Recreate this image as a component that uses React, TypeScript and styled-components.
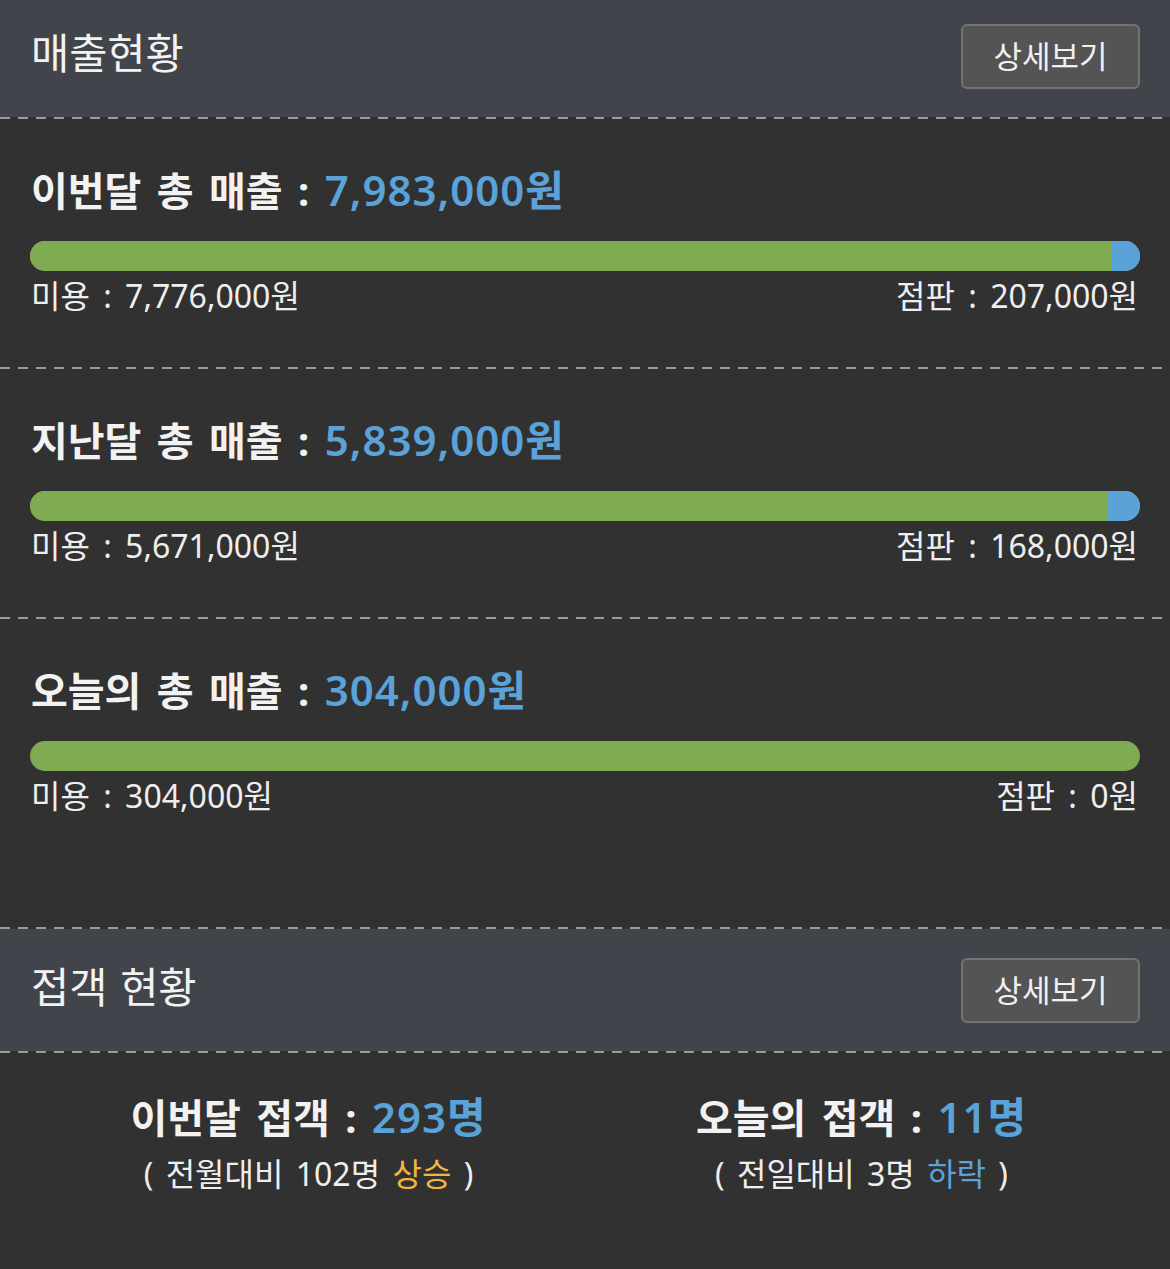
import React from "react";
import styled, { createGlobalStyle } from "styled-components";

const GlobalStyle = createGlobalStyle`
  html, body {
    margin: 0;
    padding: 0;
    background: #313131;
  }
  body {
    font-family: "Noto Sans", "Noto Sans CJK KR", sans-serif;
    color: #f0f0f0;
  }
  * { box-sizing: border-box; }
`;

const Page = styled.div`
  width: 1170px;
  min-height: 1269px;
  background: #313131;
  display: flex;
  flex-direction: column;
`;

const Header = styled.header<{ $top: number }>`
  background: #41444b;
  display: flex;
  align-items: center;
  justify-content: space-between;
  padding: ${(p) => p.$top}px 30px 28px 31px;
`;

const HeaderTitle = styled.h2`
  margin: 0 0 8px;
  font-size: 41.5px;
  line-height: 48px;
  font-weight: 400;
  color: #f2f2f2;
  word-spacing: 2px;
`;

const DetailButton = styled.button`
  width: 179px;
  height: 65px;
  background: #545454;
  border: 2px solid #737373;
  border-radius: 6px;
  color: #f0f0f0;
  font-family: inherit;
  font-size: 31px;
  font-weight: 400;
  padding: 0 0 4px;
  cursor: pointer;
`;

const Dashed = styled.div`
  height: 2px;
  background-image: repeating-linear-gradient(
    to right,
    #9a9a9a 0,
    #9a9a9a 10px,
    transparent 10px,
    transparent 18px
  );
`;

const Section = styled.section<{ $bottom: number }>`
  padding: 47px 30px ${(p) => p.$bottom}px 30px;
  display: flex;
  flex-direction: column;
`;

const SectionTitle = styled.h3`
  margin: 0 0 25px 1px;
  font-size: 40px;
  line-height: 50px;
  font-weight: 700;
  color: #f2f2f2;
  word-spacing: 5px;
`;

const Accent = styled.span<{ $color: string }>`
  color: ${(p) => p.$color};
`;

const Amount = styled.span`
  color: #5ba2d8;
  font-size: 42px;
  font-weight: 600;
  line-height: 1;
  letter-spacing: 1px;
`;

const Bar = styled.div`
  height: 30px;
  border-radius: 15px;
  overflow: hidden;
  display: flex;
  background: #7fac52;
`;

const BarPart = styled.div<{ $color: string }>`
  height: 100%;
  background: ${(p) => p.$color};
`;

const Labels = styled.div`
  margin-top: 5px;
  display: flex;
  justify-content: space-between;
  font-size: 32px;
  line-height: 40px;
  color: #eeeeee;
  padding: 0 2px 0 1px;
  word-spacing: 5px;
`;

const Stats = styled.div`
  display: grid;
  grid-template-columns: 1fr 1fr;
  padding: 40px 32px 0 32px;
`;

const Stat = styled.div`
  display: flex;
  flex-direction: column;
  align-items: center;
  gap: 11px;
`;

const StatTitle = styled.div`
  font-size: 40px;
  line-height: 50px;
  font-weight: 700;
  color: #f2f2f2;
  word-spacing: 5px;
`;

const StatSub = styled.div`
  font-size: 32px;
  line-height: 40px;
  color: #eeeeee;
  word-spacing: 4px;
`;

const BLUE = "#5ba2d8";
const GREEN = "#7fac52";
const YELLOW = "#f2b640";

type Sale = { title: string; beauty: number; retail: number };

const sales: Sale[] = [
  { title: "이번달 총 매출", beauty: 7776000, retail: 207000 },
  { title: "지난달 총 매출", beauty: 5671000, retail: 168000 },
  { title: "오늘의 총 매출", beauty: 304000, retail: 0 },
];

const fmt = (n: number) => n.toLocaleString("en-US") + "원";

export default function App() {
  return (
    <Page>
      <GlobalStyle />
      <Header $top={24}>
        <HeaderTitle>매출현황</HeaderTitle>
        <DetailButton>상세보기</DetailButton>
      </Header>
      {sales.map((s, i) => {
        const total = s.beauty + s.retail;
        const beautyPct = (s.beauty / total) * 100;
        return (
          <React.Fragment key={s.title}>
            <Dashed />
            <Section $bottom={i === sales.length - 1 ? 111 : 51}>
              <SectionTitle>
                {s.title} : <Amount>{fmt(total)}</Amount>
              </SectionTitle>
              <Bar>
                <BarPart $color={GREEN} style={{ width: `${beautyPct}%` }} />
                <BarPart $color={BLUE} style={{ width: `${100 - beautyPct}%` }} />
              </Bar>
              <Labels>
                <span>미용 : {fmt(s.beauty)}</span>
                <span>점판 : {fmt(s.retail)}</span>
              </Labels>
            </Section>
          </React.Fragment>
        );
      })}
      <Dashed />
      <Header $top={29}>
        <HeaderTitle>접객 현황</HeaderTitle>
        <DetailButton>상세보기</DetailButton>
      </Header>
      <Dashed />
      <Stats>
        <Stat>
          <StatTitle>
            이번달 접객 : <Amount>293명</Amount>
          </StatTitle>
          <StatSub>
            ( 전월대비 102명 <Accent $color={YELLOW}>상승</Accent> )
          </StatSub>
        </Stat>
        <Stat>
          <StatTitle>
            오늘의 접객 : <Amount>11명</Amount>
          </StatTitle>
          <StatSub>
            ( 전일대비 3명 <Accent $color={BLUE}>하락</Accent> )
          </StatSub>
        </Stat>
      </Stats>
    </Page>
  );
}
